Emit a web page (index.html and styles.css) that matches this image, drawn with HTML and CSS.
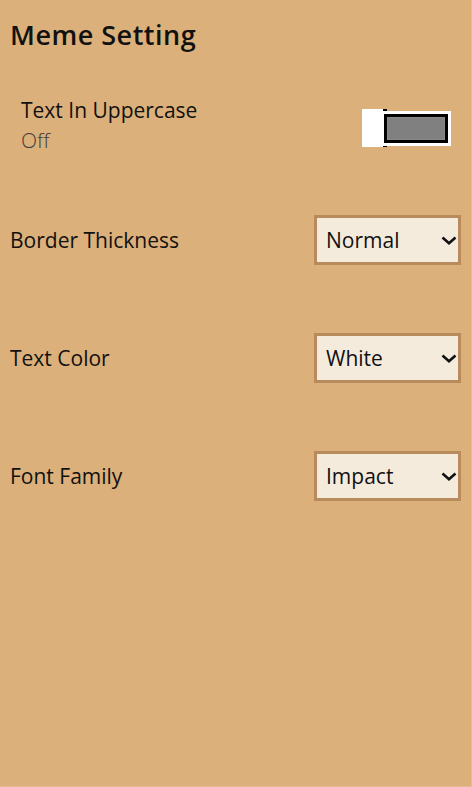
FILE: index.html
```html
<!DOCTYPE html>
<html lang="en">
<head>
<meta charset="utf-8">
<title>Meme Setting</title>
<link rel="stylesheet" href="styles.css">
</head>
<body>
<main class="page">
  <h1 class="title">Meme Setting</h1>

  <section class="toggle-row">
    <div class="toggle-text">
      <div class="toggle-label">Text In Uppercase</div>
      <div class="toggle-state">Off</div>
    </div>
    <div class="toggle" role="switch" aria-checked="false">
      <span class="toggle-track"></span>
      <span class="toggle-thumb"></span>
    </div>
  </section>

  <section class="settings">
    <div class="setting-row">
      <span class="setting-label">Border Thickness</span>
      <div class="dropdown"><span class="dropdown-value">Normal</span>
        <svg class="chevron" viewBox="0 0 16 9" width="16" height="9"><path d="M1.5 1.5 L8 7.2 L14.5 1.5" fill="none" stroke="#111" stroke-width="2.6"/></svg>
      </div>
    </div>
    <div class="setting-row">
      <span class="setting-label">Text Color</span>
      <div class="dropdown"><span class="dropdown-value">White</span>
        <svg class="chevron" viewBox="0 0 16 9" width="16" height="9"><path d="M1.5 1.5 L8 7.2 L14.5 1.5" fill="none" stroke="#111" stroke-width="2.6"/></svg>
      </div>
    </div>
    <div class="setting-row">
      <span class="setting-label">Font Family</span>
      <div class="dropdown"><span class="dropdown-value">Impact</span>
        <svg class="chevron" viewBox="0 0 16 9" width="16" height="9"><path d="M1.5 1.5 L8 7.2 L14.5 1.5" fill="none" stroke="#111" stroke-width="2.6"/></svg>
      </div>
    </div>
  </section>
</main>
</body>
</html>
```
FILE: styles.css
```css
html, body {
  margin: 0;
  padding: 0;
}
body {
  background: #dbb07a;
  font-family: "Open Sans", "Noto Sans", sans-serif;
  color: #111;
  width: 472px;
  height: 787px;
  overflow: hidden;
}
.page {
  box-sizing: border-box;
  height: 787px;
  border-right: 1px solid #e2bd8e;
  border-bottom: 1px solid #e2bd8e;
  padding: 0 10px;
}
.title {
  margin: 0;
  padding-top: 16px;
  font-size: 27px;
  font-weight: 600;
  line-height: 38px;
  letter-spacing: 0.5px;
}
.toggle-row {
  display: flex;
  justify-content: space-between;
  align-items: flex-start;
  margin-top: 41px;
  padding-left: 11px;
}
.toggle-text {
  display: flex;
  flex-direction: column;
}
.toggle-label {
  font-size: 21px;
  line-height: 30px;
}
.toggle-state {
  font-size: 21px;
  line-height: 30px;
  font-weight: 300;
  color: #3f3f3f;
}
.toggle {
  display: flex;
  flex-direction: row-reverse;
  align-items: center;
  margin-right: 13px;
  margin-top: 14px;
}
.toggle-thumb {
  width: 21px;
  height: 38px;
  background: #fff;
  border-right: 4px solid #000;
  box-sizing: content-box;
  margin-right: -3px;
}
.toggle-track {
  display: block;
  width: 64px;
  height: 29px;
  border: 3px solid #000;
  background: #808080;
  box-shadow: 0 0 0 3px #fff, inset 0 0 0 1px #8a8a8a;
  box-sizing: border-box;
}
.settings {
  display: flex;
  flex-direction: column;
  gap: 68px;
  margin-top: 60px;
}
.setting-row {
  display: flex;
  justify-content: space-between;
  align-items: center;
  height: 50px;
}
.setting-label {
  font-size: 21px;
}
.dropdown {
  box-sizing: border-box;
  width: 147px;
  height: 50px;
  background: #f5ebdd;
  border: 3px solid #b98a5c;
  display: flex;
  align-items: center;
  justify-content: space-between;
  padding: 0 1px 0 9px;
}
.dropdown-value {
  font-size: 21px;
}
.chevron {
  display: block;
}
```
